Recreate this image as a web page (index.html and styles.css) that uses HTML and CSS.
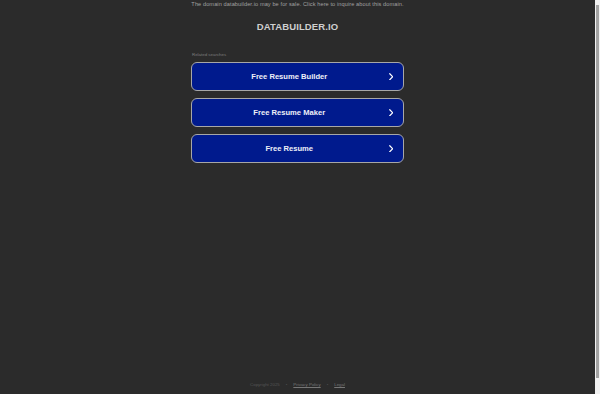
FILE: index.html
```html
<!DOCTYPE html>
<html lang="en">
<head>
<meta charset="utf-8">
<title>databuilder.io</title>
<link rel="stylesheet" href="styles.css">
</head>
<body>
<div class="page">
  <div class="topbar"><a class="sale" href="#">The domain databuilder.io may be for sale. Click here to inquire about this domain.</a></div>
  <h1 class="domain">DATABUILDER.IO</h1>
  <div class="related">
    <div class="related-title">Related searches</div>
    <a class="btn" href="#"><span class="btn-label">Free Resume Builder</span><svg class="chev" viewBox="0 0 6 10" width="4.5" height="7.5"><path d="M1 1 L5 5 L1 9" fill="none" stroke="#fff" stroke-width="1.6" stroke-linecap="round" stroke-linejoin="round"/></svg></a>
    <a class="btn" href="#"><span class="btn-label">Free Resume Maker</span><svg class="chev" viewBox="0 0 6 10" width="4.5" height="7.5"><path d="M1 1 L5 5 L1 9" fill="none" stroke="#fff" stroke-width="1.6" stroke-linecap="round" stroke-linejoin="round"/></svg></a>
    <a class="btn" href="#"><span class="btn-label">Free Resume</span><svg class="chev" viewBox="0 0 6 10" width="4.5" height="7.5"><path d="M1 1 L5 5 L1 9" fill="none" stroke="#fff" stroke-width="1.6" stroke-linecap="round" stroke-linejoin="round"/></svg></a>
  </div>
  <div class="spacer"></div>
  <footer class="footer">
    <span class="copy">Copyright 2025</span>
    <span class="dot">•</span>
    <a href="#" class="flink">Privacy Policy</a>
    <span class="dot">•</span>
    <a href="#" class="flink">Legal</a>
  </footer>
</div>
<div class="scrollbar"><div class="thumb"></div></div>
</body>
</html>
```

FILE: styles.css
```css
html, body {
  margin: 0;
  padding: 0;
  height: 100%;
  overflow: hidden;
}
body {
  background: #2b2b2b;
  font-family: "Liberation Sans", Arial, sans-serif;
}
.page {
  width: 595px;
  height: 394px;
  display: flex;
  flex-direction: column;
  align-items: center;
}
.topbar {
  height: 7px;
  display: flex;
  align-items: center;
  justify-content: center;
}
.sale {
  color: #a1a1a1;
  font-size: 5.6px;
  letter-spacing: 0.1px;
  text-decoration: none;
}
.domain {
  margin: 14px 0 0;
  font-size: 9.5px;
  line-height: 11px;
  font-weight: bold;
  color: #cfcfcf;
  letter-spacing: 0.1px;
}
.related {
  width: 213px;
  margin-top: 20px;
  display: flex;
  flex-direction: column;
  gap: 7px;
}
.related-title {
  font-size: 4.4px;
  line-height: 5px;
  color: #7d7d7d;
  margin-left: 1px;
  margin-bottom: -2px;
}
.btn {
  box-sizing: border-box;
  height: 29px;
  border: 1px solid #a7a7a7;
  border-radius: 6px;
  background: #001a8d;
  display: flex;
  align-items: center;
  padding: 0 10px 0 0;
  text-decoration: none;
}
.btn-label {
  flex: 1;
  text-align: center;
  color: #eef0f8;
  font-weight: bold;
  font-size: 7.6px;
  padding-left: 10px;
  padding-right: 12px;
}
.chev {
  display: block;
}
.spacer {
  flex: 1;
}
.footer {
  height: 12px;
  display: flex;
  align-items: flex-start;
  gap: 4px;
  font-size: 4.4px;
  color: #555;
}
.dot {
  margin: 0 2px;
}
.flink {
  color: #777;
  text-decoration: underline;
}
.scrollbar {
  position: fixed;
  top: 0;
  right: 0;
  width: 5px;
  height: 394px;
  background: #f1f1f1;
  box-sizing: border-box;
  padding: 5px 1px;
}
.thumb {
  width: 3px;
  height: 373px;
  background: #a3a3a3;
}
```
